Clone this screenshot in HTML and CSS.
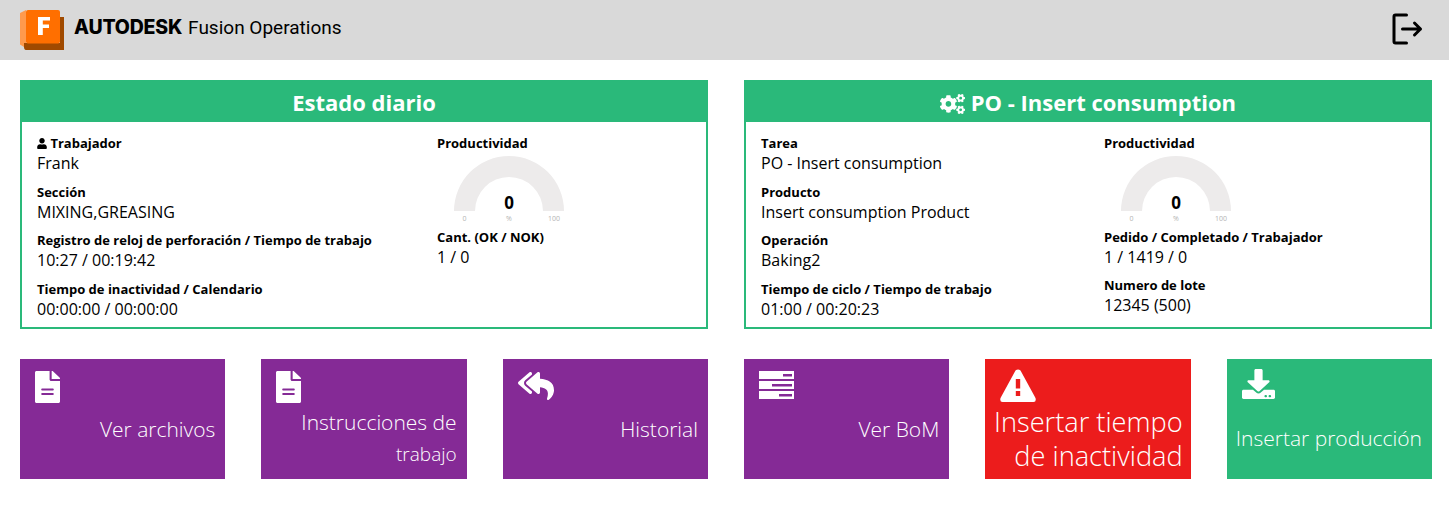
FILE: index.html
```html
<!DOCTYPE html>
<html lang="es">
<head>
    <meta charset="utf-8"/>
    <title>Fusion Operations</title>
    <link rel="stylesheet" href="styles.css">
</head>
<body>
    <header class="topbar">
        <div class="brand">
            <svg class="brand-logo" viewBox="0 0 44 40" width="44" height="40">
                <path fill="#ff9a4d" d="M6 0 0 3V34.500L4 37V33H6Z"/>
                <path fill="#a04a00" d="M40 7H44V40H6C4.500 40 4 38.500 4 37V33H40Z"/>
                <rect fill="#ff6f00" x="6" y="0" width="34" height="33.500" rx="2"/>
                <path fill="#fff" d="M18 7H30V10.500H22.800V14.500H29V18H22.800V25H18Z"/>
            </svg>
            <span class="brand-name">AUTODESK</span>
            <span class="brand-product">Fusion Operations</span>
        </div>
        <svg class="logout" viewBox="0 0 32 32" width="32" height="32" fill="none" stroke="#000" stroke-width="3" stroke-linecap="round" stroke-linejoin="round">
            <path d="M15.500 2H4.500Q3 2 3 3.500V28.500Q3 30 4.500 30H15.500"/>
            <path d="M11.500 16H29.500M23.500 10 29.500 16 23.500 22"/>
        </svg>
    </header>

    <main class="content">
        <div class="panels">
            <section class="panel">
                <h2 class="panel-title">Estado diario</h2>
                <div class="panel-body panel-body-daily">
                    <div class="col">
                        <div class="field">
                            <div class="label"><svg class="icon-user" viewBox="0 0 448 512"><path fill="#000" d="M224 256c70.700 0 128-57.300 128-128S294.700 0 224 0 96 57.300 96 128s57.300 128 128 128zm89.600 32h-16.700c-22.200 10.200-46.900 16-72.900 16s-50.600-5.800-72.900-16h-16.700C60.200 288 0 348.200 0 422.400V464c0 26.500 21.500 48 48 48h352c26.500 0 48-21.500 48-48v-41.600c0-74.200-60.200-134.400-134.400-134.400z"/></svg> Trabajador</div>
                            <div class="value">Frank</div>
                        </div>
                        <div class="field">
                            <div class="label">Sección</div>
                            <div class="value">MIXING,GREASING</div>
                        </div>
                        <div class="field">
                            <div class="label">Registro de reloj de perforación / Tiempo de trabajo</div>
                            <div class="value">10:27 / 00:19:42</div>
                        </div>
                        <div class="field">
                            <div class="label">Tiempo de inactividad / Calendario</div>
                            <div class="value">00:00:00 / 00:00:00</div>
                        </div>
                    </div>
                    <div class="col">
                        <div class="label">Productividad</div>
                        <svg class="gauge" viewBox="0 0 145 74" width="145" height="74">
                            <path fill="#edebeb" d="M17 63A55 55 0 0 1 127 63H106A34 34 0 0 0 38 63Z"/>
                            <text class="gauge-value" x="72" y="61" text-anchor="middle">0</text>
                            <text class="gauge-tick" x="27.500" y="73" text-anchor="middle">0</text>
                            <text class="gauge-tick" x="72" y="73" text-anchor="middle">%</text>
                            <text class="gauge-tick" x="117" y="73" text-anchor="middle">100</text>
                        </svg>
                        <div class="field">
                            <div class="label">Cant. (OK / NOK)</div>
                            <div class="value">1 / 0</div>
                        </div>
                    </div>
                </div>
            </section>

            <section class="panel">
                <h2 class="panel-title">
                    <svg class="icon-cogs" viewBox="0 0 640 512"><path fill="#fff" d="M512.100 191l-8.200 14.300c-3 5.300-9.400 7.500-15.100 5.400-11.800-4.400-22.600-10.700-32.100-18.600-4.600-3.800-5.800-10.500-2.800-15.700l8.200-14.300c-6.900-8-12.300-17.300-15.900-27.400h-16.500c-6 0-11.200-4.300-12.200-10.300-2-12-2.100-24.600 0-37.100 1-6 6.200-10.400 12.200-10.400h16.500c3.600-10.100 9-19.400 15.900-27.400l-8.200-14.300c-3-5.200-1.900-11.900 2.800-15.700 9.500-7.900 20.400-14.200 32.100-18.600 5.700-2.100 12.100.1 15.100 5.400l8.200 14.300c10.500-1.900 21.200-1.900 31.700 0L552 6.300c3-5.300 9.400-7.500 15.100-5.400 11.800 4.400 22.600 10.700 32.100 18.600 4.600 3.800 5.800 10.500 2.800 15.700l-8.200 14.300c6.900 8 12.300 17.300 15.900 27.400h16.500c6 0 11.200 4.300 12.200 10.300 2 12 2.100 24.600 0 37.100-1 6-6.200 10.400-12.200 10.400h-16.500c-3.600 10.100-9 19.400-15.900 27.400l8.200 14.300c3 5.200 1.900 11.900-2.800 15.700-9.500 7.900-20.400 14.200-32.100 18.600-5.700 2.100-12.100-.1-15.100-5.400l-8.200-14.300c-10.400 1.900-21.200 1.900-31.700 0zm-10.500-58.800c38.500 29.600 82.400-14.300 52.800-52.800-38.500-29.700-82.400 14.300-52.800 52.800zM386.300 286.100l33.700 16.800c10.100 5.800 14.500 18.100 10.500 29.100-8.900 24.200-26.400 46.400-42.600 65.800-7.400 8.900-20.200 11.100-30.300 5.300l-29.100-16.800c-16 13.700-34.600 24.600-54.900 31.700v33.600c0 11.600-8.300 21.600-19.700 23.600-24.600 4.200-50.400 4.400-75.900 0-11.500-2-20-11.900-20-23.600V418c-20.300-7.200-38.900-18-54.900-31.700L74 403c-10 5.800-22.900 3.600-30.300-5.300-16.200-19.400-33.300-41.600-42.200-65.700-4-10.900.4-23.200 10.500-29.100l33.300-16.800c-3.900-20.900-3.900-42.400 0-63.400L12 205.800c-10.100-5.800-14.600-18.100-10.500-29 8.900-24.200 26-46.400 42.200-65.800 7.400-8.900 20.200-11.100 30.300-5.300l29.100 16.800c16-13.700 34.600-24.600 54.900-31.700V57.100c0-11.500 8.200-21.500 19.600-23.500 24.600-4.200 50.500-4.400 76-.1 11.500 2 20 11.900 20 23.600v33.600c20.300 7.200 38.900 18 54.900 31.700l29.100-16.800c10-5.800 22.900-3.600 30.300 5.300 16.200 19.400 33.200 41.600 42.100 65.800 4 10.900.1 23.200-10 29.100l-33.700 16.800c3.900 21 3.900 42.500 0 63.500zm-117.600 21.100c59.200-77-28.700-164.900-105.700-105.700-59.200 77 28.700 164.900 105.700 105.700zm243.400 182.700l-8.200 14.300c-3 5.300-9.400 7.500-15.100 5.400-11.800-4.400-22.600-10.700-32.100-18.600-4.600-3.800-5.800-10.500-2.800-15.700l8.200-14.300c-6.900-8-12.300-17.300-15.900-27.400h-16.500c-6 0-11.200-4.300-12.200-10.300-2-12-2.100-24.600 0-37.100 1-6 6.200-10.400 12.200-10.400h16.500c3.600-10.100 9-19.400 15.900-27.400l-8.200-14.300c-3-5.200-1.900-11.900 2.800-15.700 9.500-7.900 20.400-14.200 32.100-18.600 5.700-2.100 12.100.1 15.100 5.400l8.200 14.300c10.500-1.900 21.200-1.900 31.700 0l8.200-14.300c3-5.300 9.400-7.500 15.100-5.400 11.800 4.400 22.600 10.700 32.100 18.600 4.600 3.800 5.800 10.500 2.800 15.700l-8.200 14.300c6.900 8 12.300 17.300 15.900 27.400h16.500c6 0 11.200 4.300 12.200 10.300 2 12 2.100 24.600 0 37.100-1 6-6.200 10.400-12.200 10.400h-16.500c-3.600 10.100-9 19.400-15.900 27.400l8.200 14.300c3 5.200 1.900 11.900-2.800 15.700-9.500 7.900-20.400 14.200-32.100 18.600-5.700 2.100-12.100-.1-15.100-5.400l-8.200-14.300c-10.400 1.900-21.200 1.900-31.700 0zM501.600 431c38.500 29.600 82.400-14.300 52.800-52.800-38.500-29.600-82.400 14.300-52.800 52.800z"/></svg>
                    PO - Insert consumption
                </h2>
                <div class="panel-body panel-body-task">
                    <div class="col">
                        <div class="field">
                            <div class="label">Tarea</div>
                            <div class="value">PO - Insert consumption</div>
                        </div>
                        <div class="field">
                            <div class="label">Producto</div>
                            <div class="value">Insert consumption Product</div>
                        </div>
                        <div class="field">
                            <div class="label">Operación</div>
                            <div class="value">Baking2</div>
                        </div>
                        <div class="field">
                            <div class="label">Tiempo de ciclo / Tiempo de trabajo</div>
                            <div class="value">01:00 / 00:20:23</div>
                        </div>
                    </div>
                    <div class="col">
                        <div class="label">Productividad</div>
                        <svg class="gauge" viewBox="0 0 145 74" width="145" height="74">
                            <path fill="#edebeb" d="M17 63A55 55 0 0 1 127 63H106A34 34 0 0 0 38 63Z"/>
                            <text class="gauge-value" x="72" y="61" text-anchor="middle">0</text>
                            <text class="gauge-tick" x="27.500" y="73" text-anchor="middle">0</text>
                            <text class="gauge-tick" x="72" y="73" text-anchor="middle">%</text>
                            <text class="gauge-tick" x="117" y="73" text-anchor="middle">100</text>
                        </svg>
                        <div class="field field-tight">
                            <div class="label">Pedido / Completado / Trabajador</div>
                            <div class="value">1 / 1419 / 0</div>
                        </div>
                        <div class="field">
                            <div class="label">Numero de lote</div>
                            <div class="value">12345 (500)</div>
                        </div>
                    </div>
                </div>
            </section>
        </div>

        <nav class="actions">
            <a class="action action-purple">
                <svg class="action-icon" width="25" height="32"><use href="#i-file" width="25" height="32"/></svg>
                <span class="action-label">Ver archivos</span>
            </a>
            <a class="action action-purple">
                <svg class="action-icon" width="25" height="32"><use href="#i-file" width="25" height="32"/></svg>
                <span class="action-label action-label-split">Instrucciones de <small>trabajo</small></span>
            </a>
            <a class="action action-purple">
                <svg class="action-icon action-icon-reply" viewBox="0 0 576 512" width="36" height="32"><path fill="#fff" d="M136.309 189.836L312.313 37.851C327.720 24.546 352 35.348 352 56.015v82.763c129.182 10.231 224 52.212 224 183.548 0 61.441-39.582 122.309-83.333 154.132-13.653 9.931-33.111-2.533-28.077-18.631 38.512-123.162-3.922-169.482-112.590-182.015v84.175c0 20.701-24.300 31.453-39.687 18.164L136.309 226.164c-11.071-9.561-11.086-26.753 0-36.328zm-128 36.328L184.313 378.150C199.700 391.439 224 380.687 224 359.986v-15.818l-108.606-93.785A55.960 55.960 0 0 1 96 207.998a55.953 55.953 0 0 1 19.393-42.380L224 71.832V56.015c0-20.667-24.280-31.469-39.687-18.164L8.309 189.836c-11.086 9.575-11.071 26.767 0 36.328z"/></svg>
                <span class="action-label">Historial</span>
            </a>
            <a class="action action-purple">
                <svg class="action-icon action-icon-bom" viewBox="0 0 35 28" width="35" height="28">
                    <path fill="#fff" fill-rule="evenodd" d="M0 0H35V8H0ZM24 3V5.500H33V3ZM0 10H35V18H0ZM13 13V15.500H33V13ZM0 20H35V28H0ZM20 23V25.500H33V23Z"/>
                </svg>
                <span class="action-label">Ver BoM</span>
            </a>
            <a class="action action-red">
                <svg class="action-icon action-icon-warn" viewBox="0 0 36 33" width="36" height="33">
                    <path fill="#fff" fill-rule="evenodd" d="M15.500 1.500Q18 -.500 20.500 1.500L35.500 29Q36.500 33 33.500 33H2.500Q-.500 33 .500 29ZM15.800 10V19.500H20.200V10ZM15.800 22V27H20.200V22Z"/>
                </svg>
                <span class="action-label action-label-large">Insertar tiempo de inactividad</span>
            </a>
            <a class="action action-green">
                <svg class="action-icon action-icon-down" viewBox="0 0 512 512" preserveAspectRatio="none" width="33" height="30"><path fill="#fff" d="M216 0h80c13.300 0 24 10.700 24 24v168h87.700c17.800 0 26.700 21.500 14.100 34.100L269.700 378.300c-7.500 7.500-19.800 7.500-27.300 0L90.100 226.100c-12.600-12.600-3.700-34.100 14.100-34.100H192V24c0-13.300 10.700-24 24-24zm296 376v112c0 13.300-10.700 24-24 24H24c-13.300 0-24-10.700-24-24V376c0-13.300 10.700-24 24-24h146.700l49 49c20.100 20.100 52.500 20.100 72.600 0l49-49H488c13.300 0 24 10.700 24 24zm-124 88c0-11-9-20-20-20s-20 9-20 20 9 20 20 20 20-9 20-20zm64 0c0-11-9-20-20-20s-20 9-20 20 9 20 20 20 20-9 20-20z"/></svg>
                <span class="action-label action-label-green">Insertar producción</span>
            </a>
        </nav>
    </main>

    <svg class="sprites" width="0" height="0">
        <symbol id="i-file" viewBox="0 0 384 512" preserveAspectRatio="none">
            <path fill="#fff" d="M224 136V0H24C10.700 0 0 10.700 0 24v464c0 13.300 10.700 24 24 24h336c13.300 0 24-10.700 24-24V160H248c-13.200 0-24-10.800-24-24zm64 236c0 6.600-5.400 12-12 12H108c-6.600 0-12-5.400-12-12v-8c0-6.600 5.400-12 12-12h168c6.600 0 12 5.400 12 12v8zm0-72c0 6.600-5.400 12-12 12H108c-6.600 0-12-5.400-12-12v-8c0-6.600 5.400-12 12-12h168c6.600 0 12 5.400 12 12v8zm96-178.100v6.100H256V0h6.100c6.400 0 12.500 2.500 17 7l97.900 98c4.500 4.500 7 10.600 7 16.900z"/>
        </symbol>
    </svg>
</body>
</html>
```

FILE: styles.css
```css
* {
    box-sizing: border-box;
}

body {
    margin: 0;
    background: #fff;
    color: #000;
    font-family: "Open Sans", sans-serif;
}

.sprites {
    position: absolute;
}

/* top bar */
.topbar {
    height: 60px;
    padding: 0 26px 0 20px;
    background: #d9d9d9;
    display: flex;
    align-items: center;
    justify-content: space-between;
}

.brand {
    display: flex;
    align-items: center;
    color: #000;
}

.brand-logo {
    margin-right: 10px;
}

.brand-name {
    font-family: Inter, sans-serif;
    font-weight: 800;
    font-size: 19.500px;
    letter-spacing: -0.2px;
    margin-right: 6px;
    margin-bottom: 6px;
}

.brand-product {
    font-family: Roboto, sans-serif;
    font-size: 19px;
    margin-bottom: 6px;
}

.logout {
    margin-top: -2px;
}

/* layout */
.content {
    padding: 20px 17px 0 20px;
}

.panels {
    display: grid;
    grid-template-columns: 1fr 1fr;
    gap: 36px;
}

/* panels */
.panel {
    height: 249px;
    border: 2px solid #2ab97a;
}

.panel-title {
    margin: 0;
    height: 40px;
    background: #2ab97a;
    color: #fff;
    font-size: 22px;
    font-weight: 700;
    line-height: 40px;
    text-align: center;
}

.icon-cogs {
    width: 25px;
    height: 20px;
    vertical-align: -3px;
}

.panel-body {
    display: grid;
    padding: 12px 15px 0;
}

.panel-body-daily {
    grid-template-columns: 400px 1fr;
}

.panel-body-task {
    grid-template-columns: 343px 1fr;
}

.field {
    margin-bottom: 8px;
    height: 40.500px;
}

.field-tight {
    margin-bottom: 7.500px;
}

.label {
    font-size: 13px;
    font-weight: 700;
    line-height: 18px;
}

.icon-user {
    width: 10px;
    height: 11px;
    vertical-align: -1px;
}

.value {
    font-size: 16px;
    line-height: 22px;
}

/* gauge */
.gauge {
    display: block;
    margin-top: -4px;
    margin-bottom: 6px;
}

.gauge-value {
    font-size: 17px;
    font-weight: 700;
}

.gauge-tick {
    font-size: 7px;
    fill: #b3b3b3;
}

/* action buttons */
.actions {
    margin-top: 30px;
    display: grid;
    grid-template-columns: repeat(6, 1fr);
    gap: 36px;
}

.action {
    height: 120px;
    padding: 12px 10px 0 15px;
    color: #fff;
    font-weight: 300;
    display: flex;
    flex-direction: column;
}

.action-purple {
    background: #852a96;
}

.action-red {
    background: #ec1c1c;
}

.action-green {
    background: #2ab97a;
}

.action-icon {
    display: block;
    flex: none;
}

.action-icon-reply {
    margin-top: -1px;
    margin-bottom: 1px;
}

.action-icon-bom {
    margin-bottom: 4px;
}

.action-icon-warn {
    margin-top: -2px;
}

.action-icon-down {
    margin-top: -2px;
    margin-bottom: 3px;
}

.action-label {
    margin-top: 11px;
    font-size: 21px;
    line-height: 31px;
    text-align: right;
}

.action-label-split {
    margin-top: 4px;
}

.action-label-split small {
    font-size: 19px;
}

.action-label-large {
    margin-top: 3px;
    margin-left: -14px;
    margin-right: -2px;
    font-size: 27.200px;
    line-height: 34px;
}

.action-label-green {
    margin-top: 21px;
    margin-left: -8px;
    margin-right: 0;
    white-space: nowrap;
}
```
